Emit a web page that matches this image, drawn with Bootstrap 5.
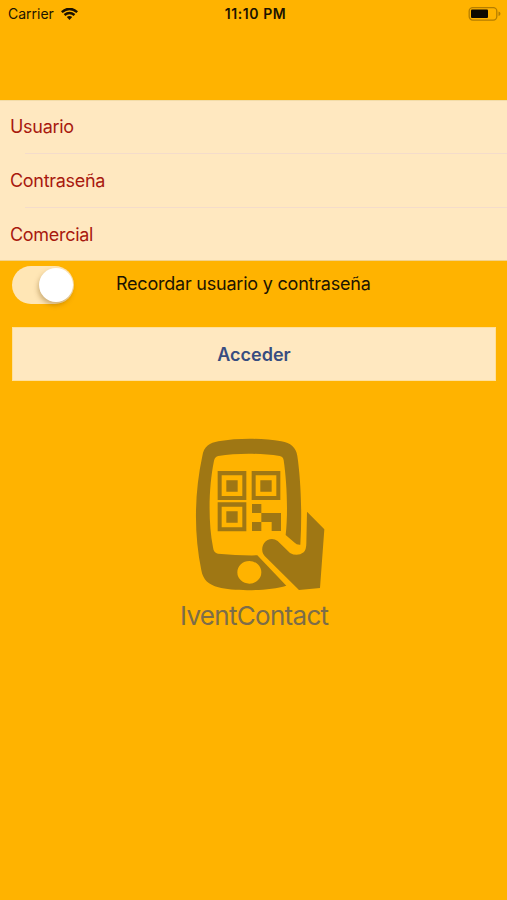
<!DOCTYPE html>
<html lang="es">
<head>
<meta charset="utf-8">
<meta name="viewport" content="width=device-width, initial-scale=1">
<title>IventContact</title>
<link href="https://cdn.jsdelivr.net/npm/bootstrap@5.3.0/dist/css/bootstrap.min.css" rel="stylesheet">
<style>
body{background:#ffb300;font-family:Inter,"Liberation Sans",sans-serif;color:#1c1400;min-height:900px;overflow:hidden}
.status-bar{height:28px;font-size:14px;line-height:28px;padding:0 6px 0 8px}
.status-bar>div{flex:1 1 0}
.status-bar .clock{flex:0 0 auto;font-weight:600;font-size:14px;letter-spacing:.6px;padding-left:2px}
.fields{margin-top:72px;background:#ffe8c0;height:161px;border-top:1px solid #f3dca8;border-bottom:1px solid #f3d28a}
.field-row{height:53.5px;line-height:51px;padding-left:10px;color:#a8190f;font-size:18px;letter-spacing:-.3px;position:relative}
.field-row+.field-row::before{content:"";position:absolute;left:25px;right:0;top:-1.5px;height:1px;background:#f4dccb}
.field-row:last-child{line-height:53px}
.remember{height:66px;padding:5px 12px 0}
.switch-track{width:62px;height:38px;border-radius:19px;background:#ffe6b5;padding:2px 1px;display:flex;justify-content:flex-end}
.switch-knob{width:34px;height:34px;border-radius:50%;background:#fff;box-shadow:-1px 3px 5px rgba(110,70,0,.35)}
.remember-text{margin-left:42px;font-size:18px;line-height:35px;letter-spacing:-.22px}
.btn-access{height:54px;margin:0 11px 0 12px;background:#ffe8c0;border:1px solid #ffe09c;border-radius:0;color:#374d80;font-size:18px;font-weight:600;line-height:52px;padding:1px 0 0}
.brand-art{margin-top:56px;margin-left:195px}
.brand-name{margin:5px 0 0 180px;font-size:26px;line-height:38px;color:#7c6d49;font-weight:400;letter-spacing:-.7px}
.t{display:inline-block;white-space:nowrap}
.wifi{margin-left:7px}
</style>
</head>
<body>
<header class="status-bar d-flex align-items-center">
  <div class="d-flex align-items-center"><span class="t">Carrier</span>
    <svg class="wifi" width="17" height="13" viewBox="0 0 17 13" fill="none" stroke="#1c1200" stroke-width="2.5"><path d="M.8 4.100Q8.500-2.300 16.200 4.100M3.500 7Q8.500 3 13.500 7"/><path d="M5.800 9Q8.500 7.100 11.200 9L8.500 11.900Z" fill="#1c1200" stroke="none"/></svg>
  </div>
  <span class="clock">11:10 PM</span>
  <div class="d-flex justify-content-end">
    <svg width="33" height="15" viewBox="0 0 33 15"><rect x="1.200" y=".6" width="27.600" height="12.500" rx="3.500" fill="none" stroke="#b57e00" stroke-width="1.300"/><rect x="3" y="2.500" width="17" height="8.500" rx="1" fill="#0d0900"/><path d="M30.500 4.600V9.100Q32.500 8.600 32.500 6.850T30.500 4.600" fill="#b57e00"/></svg>
  </div>
</header>
<main>
  <section class="fields">
    <div class="field-row"><span class="t">Usuario</span></div>
    <div class="field-row"><span class="t">Contraseña</span></div>
    <div class="field-row"><span class="t">Comercial</span></div>
  </section>
  <div class="remember d-flex align-items-start">
    <div class="switch-track" role="switch" aria-checked="true"><div class="switch-knob"></div></div>
    <span class="remember-text t">Recordar usuario y contraseña</span>
  </div>
  <div class="d-grid"><button class="btn btn-access" type="button">Acceder</button></div>
  <svg class="brand-art d-block" width="132" height="155" viewBox="75 21 396 465" fill="#9f7714">
    <path fill-rule="evenodd" d="M97 78C101 50 120 38 145 34C205 24 275 24 334 34C362 39 378 52 382 78C392 145 397 245 391 344Q380 345 374 338L347 315C355 245 350 150 341 91Q339 79 329 78C270 69 200 69 145 78Q135 80 132 92C117 165 113 270 129 352Q131 370 144 371Q205 377 262 376L349 467C295 483 195 485 145 472C116 464 99 450 94 421C71 310 73 190 97 78ZM202 427A36 34 0 1 0 274 427A36 34 0 1 0 202 427Z"/>
    <path d="M411 245L463 298L450 474L387 480L284 378C271 364 276 338 293 330Q309 323 323 333L360 369Q382 381 401 367Q409 359 409 340Z"/>
    <path fill-rule="evenodd" d="M143 123H229V210H143ZM155 136V198H217V136ZM245 123H331V210H245ZM257 136V198H319V136ZM143 217H229V304H143ZM155 230V292H217V230Z"/>
    <path d="M169 151H203V185H169ZM271 151H305V185H271ZM169 244H203V278H169ZM246 222H274V249H246ZM274 249H333V303H305V276H274ZM246 276H274V303H246Z"/>
  </svg>
  <div class="brand-name"><span class="t">IventContact</span></div>
</main>
<script src="https://cdn.jsdelivr.net/npm/bootstrap@5.3.0/dist/js/bootstrap.bundle.min.js"></script>
</body>
</html>
